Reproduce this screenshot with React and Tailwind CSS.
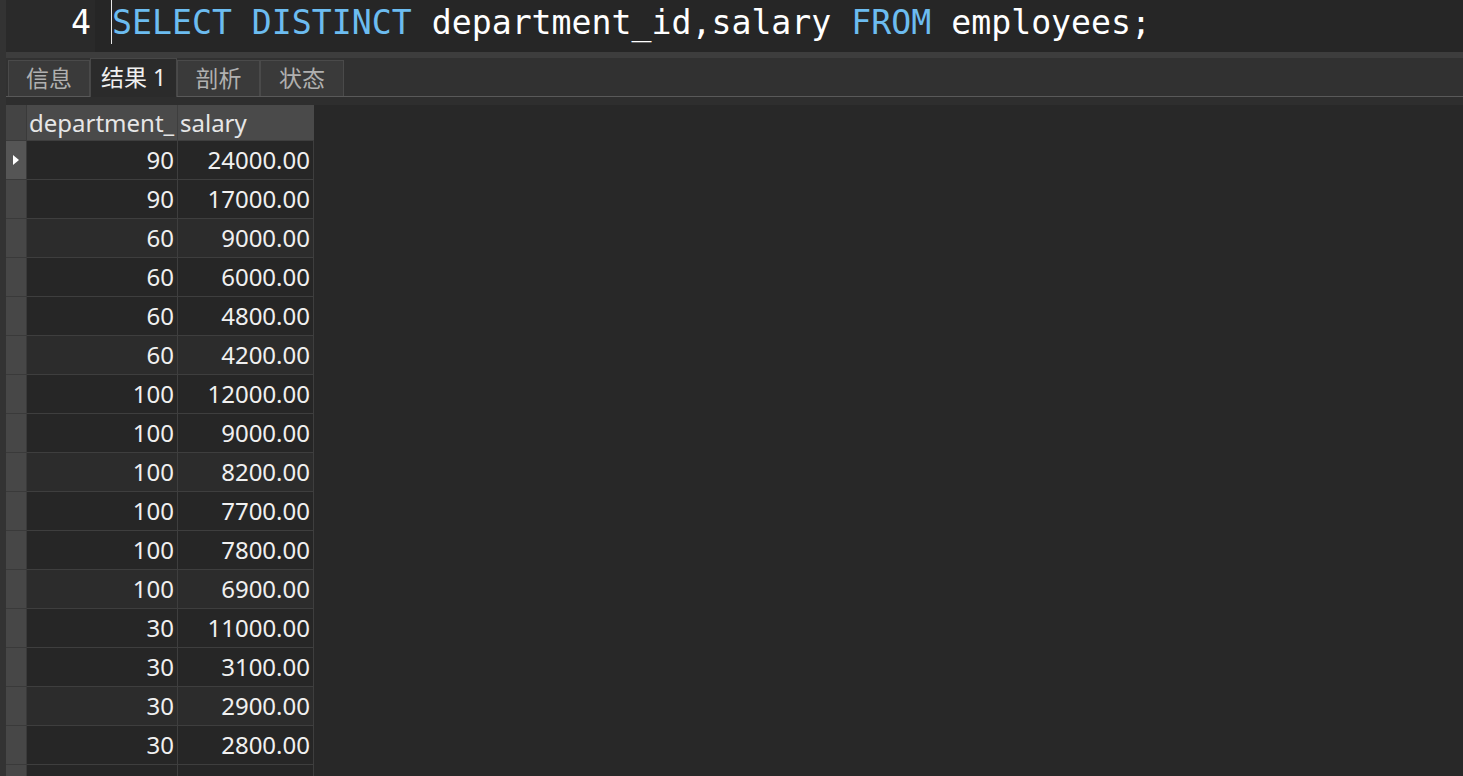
import React from 'react';

const rows = [
  [90, '24000.00'],
  [90, '17000.00'],
  [60, '9000.00'],
  [60, '6000.00'],
  [60, '4800.00'],
  [60, '4200.00'],
  [100, '12000.00'],
  [100, '9000.00'],
  [100, '8200.00'],
  [100, '7700.00'],
  [100, '7800.00'],
  [100, '6900.00'],
  [30, '11000.00'],
  [30, '3100.00'],
  [30, '2900.00'],
  [30, '2800.00'],
  [30, '2600.00'],
];

const tabs = ['信息', '结果 1', '剖析', '状态'];

const mono = { fontFamily: '"DejaVu Sans Mono", monospace' };
const ui = { fontFamily: '"Noto Sans", "Noto Sans CJK SC", sans-serif' };

function Editor() {
  return (
    <div className="flex h-[52px] shrink-0" style={mono}>
      <div className="w-[89px] bg-[#2a2a2a] text-[33.2px] leading-[46px] text-white text-right pr-[4px]">4</div>
      <div className="flex-1 bg-[#262626] pl-[16px]">
        <div className="h-[44px] border-l border-[#e8e8e8] text-[33.2px] leading-[46px] whitespace-pre">
          <span className="text-[#6cbcf0]">SELECT DISTINCT </span>
          <span className="text-white">department_id,salary </span>
          <span className="text-[#6cbcf0]">FROM </span>
          <span className="text-white">employees;</span>
        </div>
      </div>
    </div>
  );
}

function Tabs() {
  const widths = ['w-[82px]', 'w-[87px]', 'w-[83px]', 'w-[84px]'];
  return (
    <div className="h-[39px] shrink-0 bg-[#313131] border-b border-[#595959] flex items-end pl-[2px]" style={ui}>
      {tabs.map((t, i) => {
        const active = i === 1;
        return (
          <div
            key={t}
            className={
              widths[i] +
              ' flex items-center justify-center text-[23px] ' +
              (active
                ? 'h-[39px] -mb-px bg-[#2b2b2b] border-t border-x border-[#474747] text-[#f0f0f0]'
                : 'h-[36px] bg-[#3a3a3a] border border-[#4a4a4a] border-b-0 text-[#b0b0b0]')
            }
          >
            <span className="-mt-[1px]">{t}</span>
          </div>
        );
      })}
    </div>
  );
}

function Grid() {
  return (
    <div className="flex flex-col" style={ui}>
      <div className="flex h-[36px]">
        <div className="w-[21px] bg-[#444444] border-r border-b border-[#3a3a3a]" />
        <div className="w-[151px] bg-[#4a4a4a] border-r border-b border-[#3e3e3e] pl-[2px]">
          <div className="w-[146px] overflow-hidden whitespace-nowrap text-[24px] leading-[36px] text-[#e6e6e6]">
            department_id
          </div>
        </div>
        <div className="w-[136px] bg-[#4a4a4a] border-b border-[#3e3e3e] text-[24px] leading-[36px] text-[#e6e6e6] pl-[2px]">
          salary
        </div>
      </div>
      {rows.map(([d, s], i) => {
        const bg = i % 3 === 2 ? 'bg-[#2c2c2c]' : 'bg-[#262626]';
        return (
          <div key={i} className="flex h-[39px]">
            <div
              className={
                'w-[21px] border-r border-b border-[#3a3a3a] flex items-center justify-center ' +
                (i === 0 ? 'bg-[#555555]' : 'bg-[#474747]')
              }
            >
              {i === 0 && (
                <svg width="6" height="10" viewBox="0 0 6 10">
                  <path d="M0 0 L6 5 L0 10 Z" fill="#ffffff" />
                </svg>
              )}
            </div>
            <div className={'w-[151px] border-r border-b border-[#3e3e3e] text-right pr-[3px] text-[24px] leading-[38px] text-[#f0f0f0] ' + bg}>
              {d}
            </div>
            <div className={'w-[136px] border-r border-b border-[#3e3e3e] text-right pr-[3px] text-[24px] leading-[38px] text-[#f0f0f0] ' + bg}>
              {s}
            </div>
          </div>
        );
      })}
    </div>
  );
}

export default function App() {
  return (
    <div className="w-[1463px] h-[776px] bg-[#282828] flex overflow-hidden">
      <div className="w-[6px] shrink-0 bg-[#333333]" />
      <div className="flex-1 flex flex-col min-w-0">
        <Editor />
        <div className="h-[6px] shrink-0 bg-[#3d3d3d]" />
        <Tabs />
        <div className="h-[8px] shrink-0 bg-[#2e2e2e]" />
        <Grid />
      </div>
    </div>
  );
}
